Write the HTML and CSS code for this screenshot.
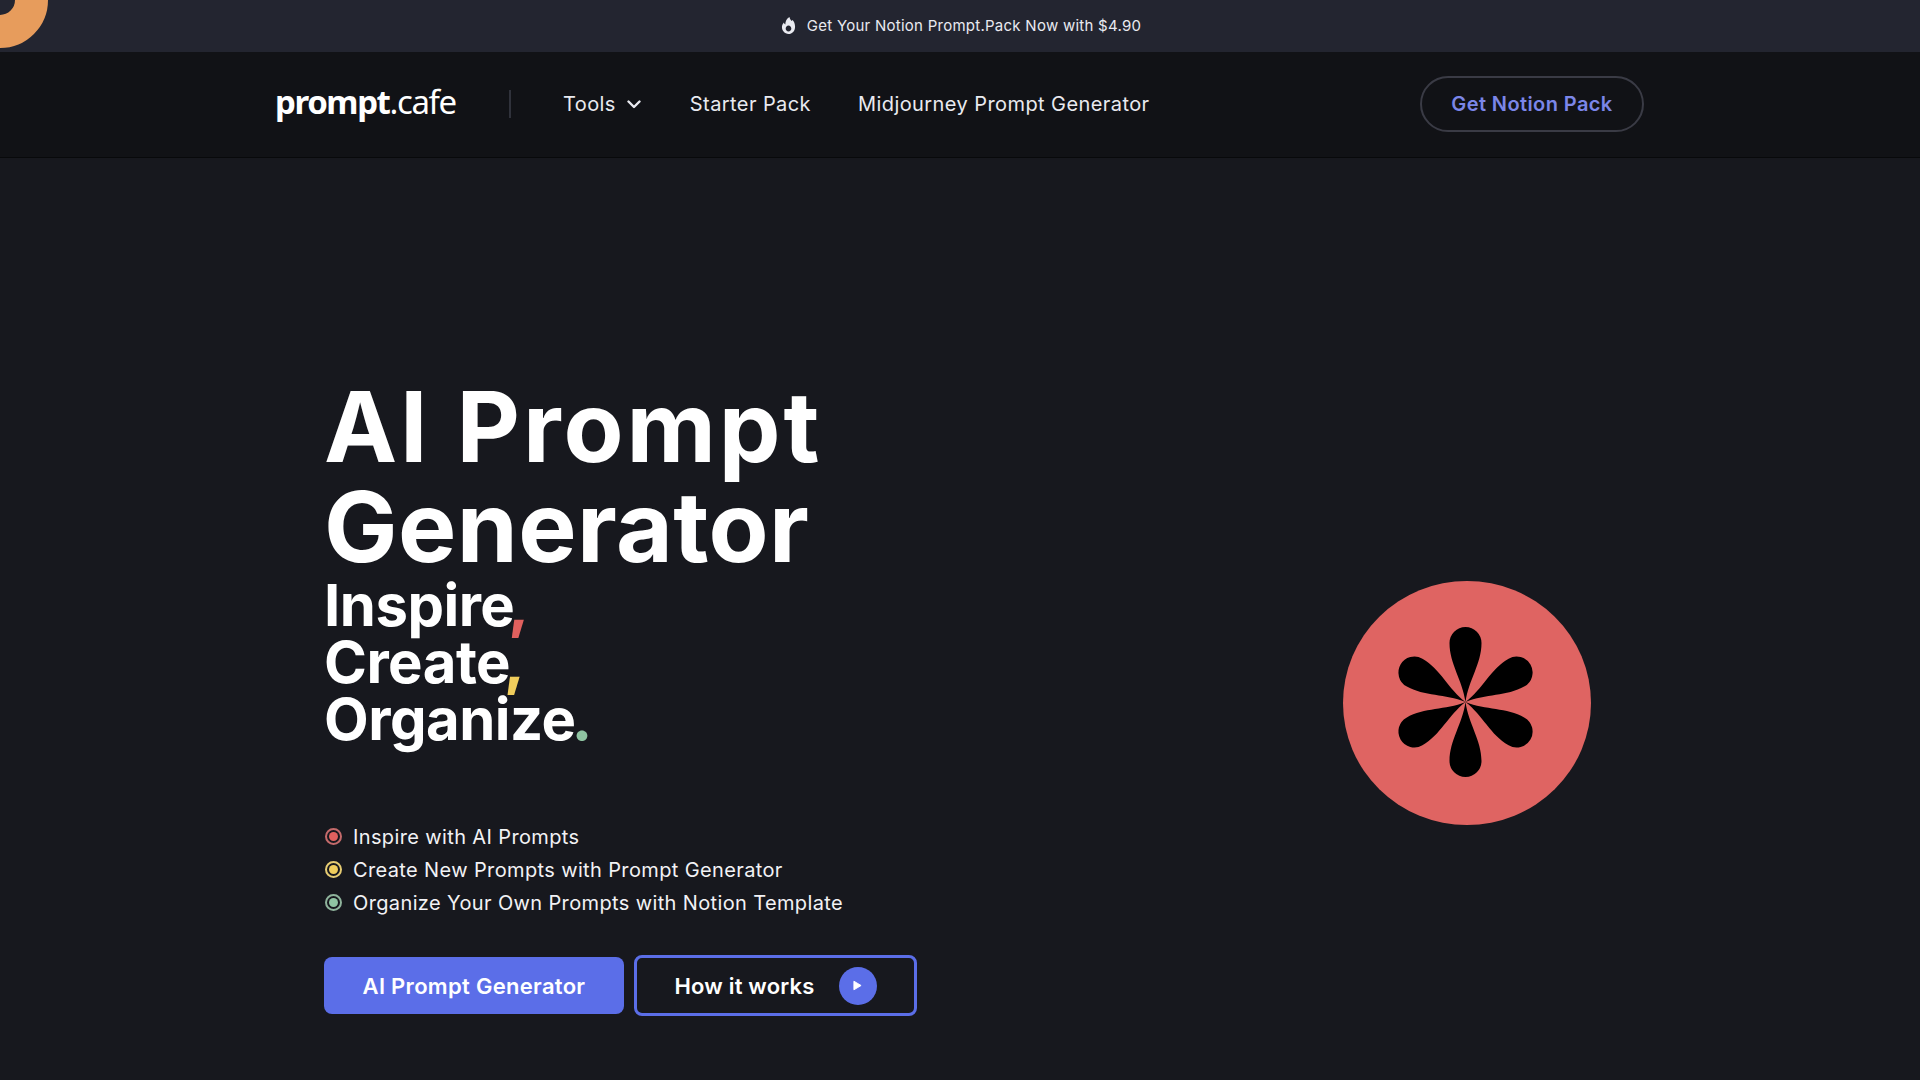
FILE: index.html
```html
<!DOCTYPE html>
<html lang="en">
<head>
<meta charset="utf-8">
<title>prompt.cafe</title>
<link rel="stylesheet" href="styles.css">
</head>
<body>
<div class="blob"></div>
<div class="topbar">
  <svg class="flame" viewBox="0 0 16 18" width="15" height="17"><path fill="#e9eaf0" fill-rule="evenodd" d="M9 0c.6 2.4 1.600 3.300 2.200 4.300l1.100-1.300c1.600 1.700 2.700 4 2.700 7.200C15 14.600 12 18 8 18s-7-3.200-7-7.300c0-2.200 1-3.900 2.100-5 .2 1 .7 1.800 1.500 2.300C4.500 4.500 6.300 1.500 9 0ZM8 9c-1.700 0-3 1.500-3 3.300 0 1.700 1.300 3.100 3 3.100s3-1.400 3-3.100C11 10.500 9.700 9 8 9Z"/></svg>
  <span>Get Your Notion Prompt.Pack Now with $4.90</span>
</div>
<header class="navbar">
  <div class="nav-inner">
    <a class="logo"><b>prompt</b><span class="logo-light">.cafe</span></a>
    <span class="divider"></span>
    <nav class="links">
      <a class="link tools">Tools
        <svg class="chev" viewBox="0 0 14 9" width="14" height="9"><path d="M1.500 1.500 7 7l5.500-5.500" fill="none" stroke="#e9eaf0" stroke-width="2.400" stroke-linecap="round" stroke-linejoin="round"/></svg>
      </a>
      <a class="link">Starter Pack</a>
      <a class="link">Midjourney Prompt Generator</a>
    </nav>
    <a class="pack-btn">Get Notion Pack</a>
  </div>
</header>
<main class="hero">
  <section class="copy">
    <h1><span class="line-a">AI Prompt</span><br><span class="line-b">Generator</span></h1>
    <h2>Inspire<span class="mark red">,</span><br>Create<span class="mark yellow">,</span><br>Organize<span class="mark green">.</span></h2>
    <ul class="points">
      <li><i class="dot dot-red"></i>Inspire with AI Prompts</li>
      <li><i class="dot dot-yellow"></i>Create New Prompts with Prompt Generator</li>
      <li><i class="dot dot-green"></i>Organize Your Own Prompts with Notion Template</li>
    </ul>
    <div class="actions">
      <a class="btn-primary">AI Prompt Generator</a>
      <a class="btn-outline">How it works
        <span class="play"><svg viewBox="0 0 10 12" width="9" height="11"><path d="M1 1.200v9.600L9 6Z" fill="#fff" stroke="#fff" stroke-linejoin="round"/></svg></span>
      </a>
    </div>
  </section>
  <div class="badge">
    <svg viewBox="-124 -122 248 244" width="248" height="244">
      <ellipse cx="0" cy="0" rx="124" ry="122" fill="#df6462"/>
      <g transform="translate(-1.500 -1)" fill="#000">
        <path d="M0 0C-3-22-16-38-16-59A16 16 0 0 1 16-59C16-38 3-22 0 0Z"/>
        <path transform="rotate(60)" d="M0 0C-3-22-16-38-16-59A16 16 0 0 1 16-59C16-38 3-22 0 0Z"/>
        <path transform="rotate(120)" d="M0 0C-3-22-16-38-16-59A16 16 0 0 1 16-59C16-38 3-22 0 0Z"/>
        <path transform="rotate(180)" d="M0 0C-3-22-16-38-16-59A16 16 0 0 1 16-59C16-38 3-22 0 0Z"/>
        <path transform="rotate(240)" d="M0 0C-3-22-16-38-16-59A16 16 0 0 1 16-59C16-38 3-22 0 0Z"/>
        <path transform="rotate(300)" d="M0 0C-3-22-16-38-16-59A16 16 0 0 1 16-59C16-38 3-22 0 0Z"/>
      </g>
    </svg>
  </div>
</main>
</body>
</html>
```
FILE: styles.css
```css
* { box-sizing: border-box; }
html, body { margin: 0; height: 1080px; overflow: hidden; }
body {
  background: #17181e;
  color: #fff;
  font-family: Inter, "Liberation Sans", sans-serif;
  position: relative;
}
a { color: inherit; text-decoration: none; }

.blob {
  position: absolute;
  left: -48px;
  top: -48px;
  width: 96px;
  height: 96px;
  border-radius: 50%;
  border: 33px solid #e79c5c;
  background: #232530;
}

.topbar {
  height: 52px;
  padding: 0 0 2px 2px;
  background: #232530;
  display: flex;
  align-items: center;
  justify-content: center;
  gap: 11px;
  font-size: 15px;
  font-weight: 400;
  letter-spacing: 0.26px;
  color: #e9eaf0;
}
.flame { display: block; }

.navbar {
  height: 106px;
  background: #111216;
  border-bottom: 1px solid #08090b;
}
.nav-inner {
  width: 1368px;
  height: 104px;
  margin: 0 auto;
  display: flex;
  align-items: center;
}
.logo {
  font-family: "Noto Sans", sans-serif;
  font-size: 33px;
  letter-spacing: -1.4px;
  line-height: 1;
  width: 233px;
  margin-top: -5px;
  margin-left: -1px;
}
.logo b { font-weight: 700; }
.logo-light { font-weight: 400; }
.divider {
  width: 2px;
  height: 28px;
  background: #30323b;
  margin-left: 1px;
  margin-right: 53px;
}
.links {
  display: flex;
  align-items: center;
  gap: 47px;
  flex: 1;
}
.link {
  font-size: 20px;
  font-weight: 400;
  letter-spacing: 0.42px;
  color: #e9eaf0;
  display: flex;
  align-items: center;
  gap: 11px;
  white-space: nowrap;
}
.tools { margin-right: 2px; margin-left: -1px; }
.pack-btn {
  width: 224px;
  height: 56px;
  border: 2px solid #3a3b45;
  border-radius: 28px;
  display: flex;
  align-items: center;
  justify-content: center;
  color: #7b86e8;
  font-size: 20px;
  font-weight: 600;
  letter-spacing: 0.4px;
}

.hero {
  width: 1368px;
  margin: 0 auto;
  padding: 219px 53px 0 48px;
  display: flex;
  justify-content: space-between;
  align-items: flex-start;
}
.copy { width: 640px; }
h1 {
  margin: 0;
  font-size: 98px;
  line-height: 100px;
  font-weight: 700;
}
.line-a { letter-spacing: 2.9px; }
.line-b { letter-spacing: 0.4px; }
h2 {
  margin: 0;
  font-size: 58px;
  line-height: 57px;
  font-weight: 700;
  letter-spacing: -0.5px;
}
.mark { font-weight: 800; margin-left: -6px; }
.green { margin-left: -4px; }
.red { color: #e0605e; }
.yellow { color: #f0cd5c; }
.green { color: #8fc4a2; }

.points {
  list-style: none;
  margin: 72px 0 0;
  padding: 0;
}
.points li {
  display: flex;
  align-items: center;
  gap: 11px;
  height: 33px;
  font-size: 20px;
  letter-spacing: 0.37px;
  color: #f2f2f5;
  white-space: nowrap;
}
.dot {
  width: 17px;
  height: 17px;
  border-radius: 50%;
  border: 2px solid;
  background-clip: content-box;
  padding: 2px;
  margin-left: 1px;
}
.dot-red { background-color: #e0605e; border-color: #c46a6b; }
.dot-yellow { background-color: #f0cd5c; border-color: #e5cb73; }
.dot-green { background-color: #8fc4a2; border-color: #8fb39c; }

.actions {
  display: flex;
  align-items: center;
  gap: 10px;
  margin-top: 36px;
}
.btn-primary {
  width: 300px;
  height: 57px;
  background: #5b6ee8;
  border-radius: 8px;
  display: flex;
  align-items: center;
  justify-content: center;
  font-size: 22px;
  font-weight: 600;
  letter-spacing: 0.3px;
}
.btn-outline {
  width: 283px;
  height: 61px;
  border: 3px solid #5b6ee8;
  border-radius: 8px;
  display: flex;
  align-items: center;
  justify-content: center;
  gap: 24px;
  font-size: 22px;
  font-weight: 600;
  letter-spacing: 0.2px;
}
.play {
  width: 38px;
  height: 38px;
  border-radius: 50%;
  background: #5b6ee8;
  display: flex;
  align-items: center;
  justify-content: center;
}

.badge { margin-top: 204px; }
.badge svg { display: block; }
```
